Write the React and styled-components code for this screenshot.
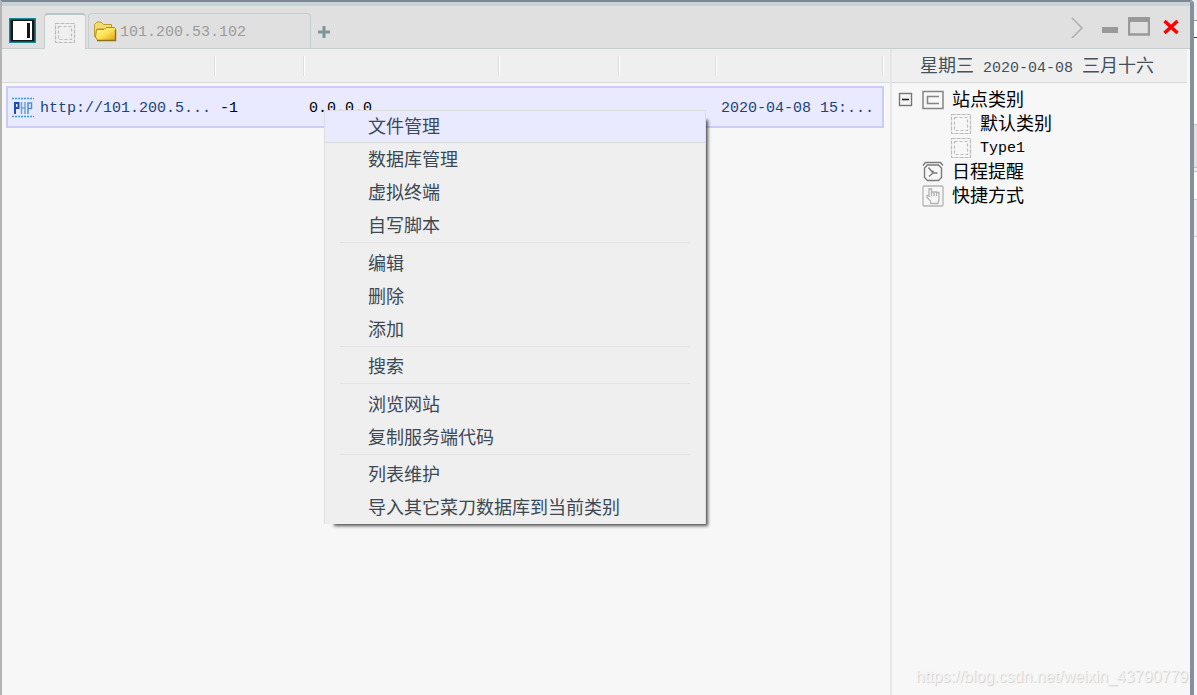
import React from 'react';
import styled, { createGlobalStyle, css } from 'styled-components';

const GlobalStyle = createGlobalStyle`
    * {
        box-sizing: border-box;
    }
    html, body, #root {
        height: 100%;
    }
    body {
        margin: 0;
        overflow: hidden;
        background: #fff;
        font-family: "Liberation Mono", "Noto Sans CJK SC", monospace;
        font-size: 15px;
        color: #000;
    }
    button {
        padding: 0;
        border: 0;
        background: none;
        font: inherit;
        color: inherit;
    }
    svg {
        display: block;
    }
`

const Desktop = styled.div`
    display: flex;
    height: 100%;
`

const Window = styled.div`
    position: relative;
    flex: 1;
    min-width: 0;
    display: flex;
    flex-direction: column;
    background: #f7f7f7;
    border-top: 2px solid #7d8894;
    border-left: 2px solid #b4b4b4;
    border-right: 4px solid #84909b;
    border-top-right-radius: 4px;
`

const TitleBar = styled.header`
    display: flex;
    align-items: flex-end;
    height: 47px;
    border-top: 4px solid #c8d3d3;
    border-bottom: 1px solid #c4d0d0;
    background: #e0e0e0;
`

const Logo = styled.button`
    margin: 0 8px 5px 7px;
`

const Tab = styled.button`
    display: flex;
    align-items: center;
    gap: 3px;
    height: 35px;
    margin-right: 2px;
    padding-top: 2px;
    color: #9b9b9b;
    border: 1px solid #c4d0d0;
    border-bottom: 0;
    border-radius: 4px 4px 0 0;
    ${p => p.$active ? css`
        width: 42px;
        height: 36px;
        justify-content: center;
        margin-bottom: -1px;
        background: #f0f0f0;
        border-top: 2px solid #b4c6c8;
    ` : css`
        width: 223px;
        padding-left: 4px;
    `}
`

const AddTab = styled.button`
    margin: 0 0 9px 3px;
`

const Controls = styled.div`
    display: flex;
    align-items: center;
    gap: 10px;
    height: 42px;
    margin-left: auto;
    padding-right: 8px;
`

const Body = styled.div`
    flex: 1;
    display: flex;
    min-height: 0;
`

const ListPane = styled.main`
    flex: 1;
    min-width: 0;
    padding: 0 6px 0 4px;
    background: linear-gradient(#efefef 33px, #d8d8d8 33px, #d8d8d8 34px, #f7f7f7 34px);
`

const SiteTable = styled.table`
    width: 100%;
    table-layout: fixed;
    border-collapse: separate;
    border-spacing: 0;
    th {
        height: 37px;
        padding: 0;
        background: linear-gradient(to right, #dddddd 1px, #fff 1px) no-repeat right 7px / 2px 20px;
    }
    td {
        height: 42px;
        padding: 2px 4px 0;
        white-space: nowrap;
        overflow: hidden;
        background: #e9e9ff;
        border: 2px solid #ccccfb;
        border-width: 2px 0;
    }
    td:first-child {
        border-left-width: 2px;
    }
    td:last-child {
        border-right-width: 2px;
    }
`

const Col = styled.col`
    width: ${p => p.$width};
`

const Site = styled.div`
    display: flex;
    align-items: center;
    gap: 6px;
    color: #1b4478;
`

const Time = styled.time`
    color: #1b4478;
`

const Sidebar = styled.aside`
    width: 300px;
    border-left: 2px solid #e6e6e6;
`

const Today = styled.div`
    height: 34px;
    margin-right: 3px;
    padding: 1px 0 0 28px;
    line-height: 34px;
    color: #44505c;
    background: #efefef;
    border-bottom: 1px solid #d8d8d8;
    white-space: nowrap;
`

const Cjk = styled.span`
    font-size: 18px;
`

const Tree = styled.ul`
    margin: 0;
    padding: 5px 0 0;
    list-style: none;
`

const TreeItem = styled.li`
    display: flex;
    align-items: center;
    gap: 8px;
    height: 24px;
    padding-left: ${p => p.$level === 2 ? 58 : p.$toggle ? 6 : 30}px;
    line-height: 24px;
    white-space: nowrap;
    span {
        padding-top: 2px;
    }
`

const Toggle = styled.button`
    width: 16px;
`

const Menu = styled.div`
    position: absolute;
    left: 322px;
    top: 108px;
    width: 382px;
    min-height: 414px;
    display: flex;
    flex-direction: column;
    background: #efefef;
    border-left: 1px solid #dedede;
    border-right: 1px solid #dedede;
    box-shadow: 6px 6px 3px -4px rgba(0, 0, 0, 0.65);
`

const MenuItem = styled.button`
    height: 33px;
    padding: 4px 0 0 43px;
    text-align: left;
    font-size: 18px;
    line-height: 27px;
    color: #3c4854;
    border: 1px solid transparent;
    border-width: 1px 0;
    ${p => p.$active && css`
        background: #e9e9ff;
        border-color: #dcdcdc;
    `}
`

const Separator = styled.hr`
    flex: 1;
    width: 350px;
    margin: 0 15px;
    border: 0;
    border-top: 1px solid #e3e3e3;
`

const Watermark = styled.div`
    position: absolute;
    right: 2px;
    bottom: 8px;
    font: 16px/20px "Liberation Sans", Arial, sans-serif;
    color: #f4f4f4;
    text-shadow: 1px 1px 1px #cfcfcf;
`

// the sliver of the window that lies behind
const Behind = styled.div`
    width: 3px;
    display: flex;
    flex-direction: column;
    background: #f7f7f7;
`

const Strip = styled.div`
    height: ${p => p.$height}px;
    background: ${p => p.$color};
    border-bottom: 1px solid ${p => p.$line};
`

const FrameIcon = () => (
    <svg width="22" height="22" viewBox="0 0 22 22" fill="none" stroke="#bcbcbc" strokeWidth="1.2">
        <rect x="1.5" y="1.5" width="19" height="19" strokeDasharray="4 1" />
        <rect x="4.5" y="4.5" width="13" height="13" strokeDasharray="3 2" />
    </svg>
)

const LogoIcon = () => (
    <svg width="27" height="25" viewBox="0 0 27 25">
        <rect width="27" height="25" fill="#18889c" />
        <rect x="1.5" y="1.5" width="24" height="22" fill="#161616" />
        <rect x="4" y="3" width="19" height="19" fill="#fff" />
        <rect x="18" y="5" width="3" height="15" fill="#161616" />
    </svg>
)

const FolderIcon = () => (
    <svg width="24" height="22" viewBox="0 0 24 22">
        <defs>
            <linearGradient id="folder" x1="0" y1="0" x2="1" y2="1">
                <stop offset="0" stopColor="#fff7a0" />
                <stop offset="0.5" stopColor="#ffe154" />
                <stop offset="1" stopColor="#d8a010" />
            </linearGradient>
        </defs>
        <path d="M1.5 3.5 L4 1 H8 L10.5 3.5 H18.5 V8 H4 L3 17 L1.5 15Z" fill="#f3dc70" stroke="#c09a28" />
        <path d="M3.5 8.5 H11 L13 6.5 H21.5 L22.5 7.5 V19.5 H4.5 L2.5 16Z" fill="url(#folder)" stroke="#b98b18" />
        <path d="M4 19.5 H22.5 V9" fill="none" stroke="#8f7018" strokeWidth="1.4" />
    </svg>
)

const PhpIcon = () => (
    <svg width="22" height="22" viewBox="0 0 22 22" fill="none" strokeWidth="2">
        <path d="M0 1.5H22M0 19.5H22" stroke="#3a9ae0" strokeWidth="1.6" strokeDasharray="2 1" />
        <path d="M3 17V6H6.5V11H3" stroke="#1550b8" />
        <path d="M9.5 5V17M13 5V17M9.5 11H13" stroke="#6aa4d6" strokeWidth="1.5" />
        <path d="M16 17V6H19.5V11.5H16" stroke="#4f90d0" strokeWidth="1.5" />
    </svg>
)

const BoxIcon = () => (
    <svg width="22" height="20" viewBox="0 0 22 20" fill="none" stroke="#858585">
        <rect x="1" y="1.5" width="20" height="17" strokeWidth="1.5" />
        <path d="M17 6.5H5.5V13.5H17" strokeWidth="1.5" />
    </svg>
)

const ClockIcon = () => (
    <svg width="22" height="22" viewBox="0 0 22 22" fill="none" stroke="#7c7c7c" strokeWidth="1.4">
        <path d="M1 4.5L3.5 1.5H18.5L21 4.5" />
        <path d="M5.5 4H16.5L19.5 7V16.5L16.5 19.5H5.5L2.5 16.5V7Z" />
        <path d="M6.5 6.5L11 12L7 15.5M11 9.5V12H15.5" />
    </svg>
)

const HandIcon = () => (
    <svg width="22" height="22" viewBox="0 0 22 22" fill="none" stroke="#b4b4b4" strokeWidth="1.3">
        <rect x="1" y="1" width="20" height="20" rx="1" />
        <path d="M7 12V4H9.5V11V7H12V11V7H14.5V11V7.5H17V15L16 18.5H8.5V16L5 12.5V10.5H7" />
    </svg>
)

const menuGroups = [
    ['文件管理', '数据库管理', '虚拟终端', '自写脚本'],
    ['编辑', '删除', '添加'],
    ['搜索'],
    ['浏览网站', '复制服务端代码'],
    ['列表维护', '导入其它菜刀数据库到当前类别'],
]

function ContextMenu() {
    return (
        <Menu role="menu">
            {menuGroups.map((group, i) => (
                <React.Fragment key={i}>
                    {i > 0 && <Separator />}
                    {group.map(name => (
                        <MenuItem key={name} role="menuitem" $active={name === '文件管理'}>{name}</MenuItem>
                    ))}
                </React.Fragment>
            ))}
        </Menu>
    )
}

function SiteList() {
    return (
        <SiteTable>
            <colgroup>
                {['210px', '89px', '195px', '120px', '97px', 'auto'].map(w => <Col key={w} $width={w} />)}
            </colgroup>
            <thead>
                <tr>
                    <th /><th /><th /><th /><th /><th />
                </tr>
            </thead>
            <tbody>
                <tr>
                    <td><Site><PhpIcon />http://101.200.5...</Site></td>
                    <td>-1</td>
                    <td>0.0.0.0</td>
                    <td />
                    <td />
                    <td><Time>2020-04-08 15:...</Time></td>
                </tr>
            </tbody>
        </SiteTable>
    )
}

function SiteTree() {
    return (
        <Tree>
            <TreeItem $toggle>
                <Toggle aria-label="toggle">
                    <svg width="16" height="16" viewBox="0 0 16 16" fill="none" stroke="#777">
                        <rect x="1.5" y="1.5" width="12" height="12" strokeWidth="1.4" />
                        <path d="M4 7.5H11" stroke="#222" strokeWidth="1.6" />
                    </svg>
                </Toggle>
                <BoxIcon /><Cjk>站点类别</Cjk>
            </TreeItem>
            <TreeItem $level={2}><FrameIcon /><Cjk>默认类别</Cjk></TreeItem>
            <TreeItem $level={2}><FrameIcon /><span>Type1</span></TreeItem>
            <TreeItem><ClockIcon /><Cjk>日程提醒</Cjk></TreeItem>
            <TreeItem><HandIcon /><Cjk>快捷方式</Cjk></TreeItem>
        </Tree>
    )
}

export default function App() {
    return (
        <Desktop>
            <GlobalStyle />
            <Window>
                <TitleBar>
                    <Logo aria-label="home"><LogoIcon /></Logo>
                    <Tab $active aria-label="sites"><FrameIcon /></Tab>
                    <Tab><FolderIcon />101.200.53.102</Tab>
                    <AddTab aria-label="add">
                        <svg width="16" height="14" viewBox="0 0 16 14" stroke="#7e959c" strokeWidth="3">
                            <path d="M2 7H14M8 1V13" />
                        </svg>
                    </AddTab>
                    <Controls>
                        <button aria-label="next">
                            <svg width="24" height="22" viewBox="0 0 24 22" fill="none" stroke="#aaa" strokeWidth="1.4">
                                <path d="M4 2L14 12L4 22" />
                            </svg>
                        </button>
                        <button aria-label="minimize">
                            <svg width="16" height="20" viewBox="0 0 16 20"><path d="M0 10H16V16H0Z" fill="#999" /></svg>
                        </button>
                        <button aria-label="maximize">
                            <svg width="22" height="20" viewBox="0 0 22 20" fill="none" stroke="#999">
                                <path d="M1 3V17.5H21V3" strokeWidth="2.4" />
                                <path d="M0 2.5H22" strokeWidth="5" />
                            </svg>
                        </button>
                        <button aria-label="close">
                            <svg width="22" height="20" viewBox="0 0 22 20" stroke="#f00" strokeWidth="3.5">
                                <path d="M4.5 4L17.5 16M17.5 4L4.5 16" />
                            </svg>
                        </button>
                    </Controls>
                </TitleBar>
                <Body>
                    <ListPane><SiteList /></ListPane>
                    <Sidebar>
                        <Today><Cjk>星期三</Cjk> 2020-04-08 <Cjk>三月十六</Cjk></Today>
                        <SiteTree />
                    </Sidebar>
                </Body>
                <ContextMenu />
                <Watermark>https://blog.csdn.net/weixin_43790779</Watermark>
            </Window>
            <Behind>
                <Strip $height={21} $color="#eee" $line="#999" />
                <Strip $height={17} $color="#fff" $line="#333" />
                <Strip $height={87} $color="#fff" $line="#b8c6c6" />
                <Strip $height={43} $color="#e0e0e0" $line="#b8c6c6" />
                <Strip $height={4} $color="#eee" $line="#b8c6c6" />
                <Strip $height={28} $color="#fff" $line="#ccc" />
                <Strip $height={37} $color="#f0f0f0" $line="#ccc" />
            </Behind>
        </Desktop>
    );
};
